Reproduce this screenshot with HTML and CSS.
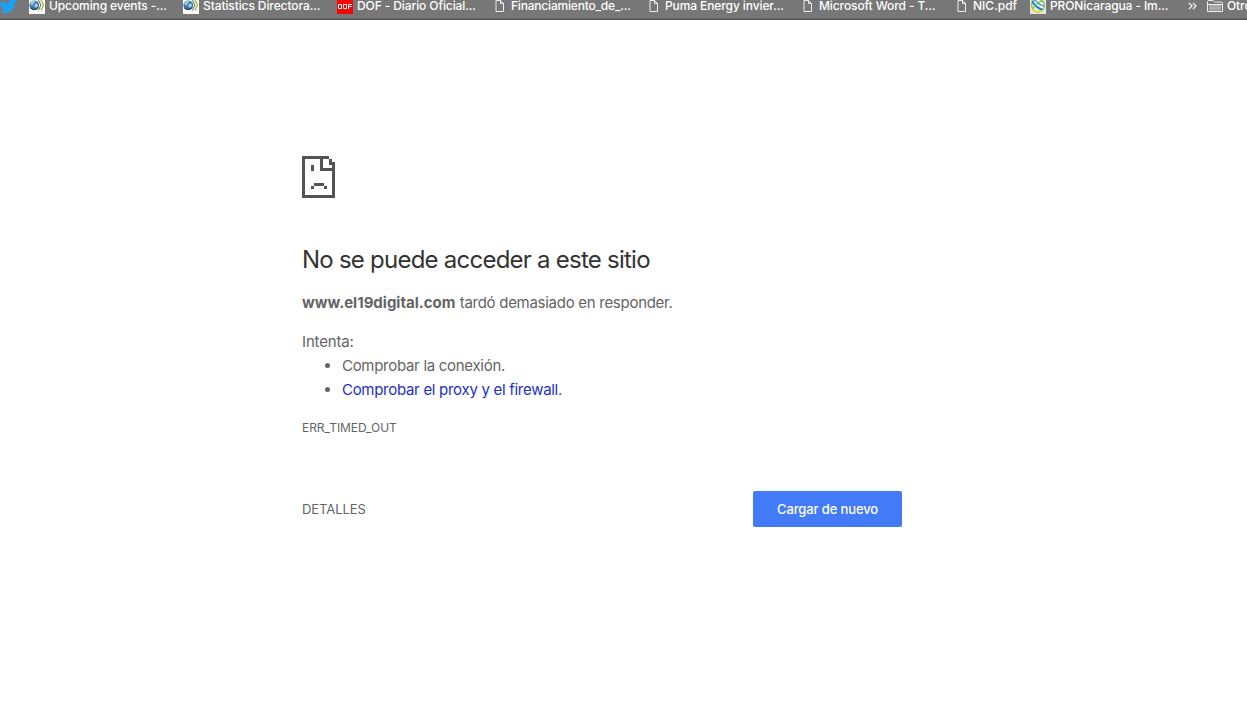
FILE: index.html
```
<!DOCTYPE html>
<html lang="es">
<head>
<meta charset="utf-8">
<title>www.el19digital.com</title>
<link rel="stylesheet" href="styles.css">
</head>
<body>
<svg class="defs" width="0" height="0">
  <symbol id="page" viewBox="0 0 10 13"><path d="M1 .5H5.500L8.500 3.500V11.500H1ZM5.500.5V3.500H8.500" fill="none" stroke="#eee"/></symbol>
  <symbol id="globe" viewBox="0 0 16 14"><path d="M0 0H16V14H0Z" fill="#fff"/><circle cx="5.300" cy="5.300" r="4.900" fill="#3d77a8"/><path d="M1 3Q4 0 7 1L5 3 3 6ZM6 4L8 3 9 6 7 8 5 6Z" fill="#a5cede"/><path d="M1.500 8Q6 11 9 7.500" stroke="#1c4b7c" stroke-width="1.300" fill="none"/><path d="M9.500 0L11.800 5 9.500 10.500" fill="none" stroke="#666" stroke-width="1"/><path d="M12 0L14.500 5 12 10.500" fill="none" stroke="#9fc33d" stroke-width="1.600"/></symbol>
</svg>
<nav class="bookmarks">
  <a class="bookmark twitter"><svg width="17" height="14" viewBox="0 0 17 14"><path d="M1.500 0C3 2.500 6 4 8.500 4 8 1 9.500-1 12-1L14.500 0H17L15 2.500C15 8 11 13 5 13 3 13 1.500 12.500 0 11.500 2 11.500 4 11 5 10 3 10 2 9 1.500 7.500H3C1 7 0 5 0 3.500L1.500 4C.5 3 .5 1 1.500 0Z" fill="#1da1f2"/></svg></a>
  <a class="bookmark events"><svg width="16" height="14"><use href="#globe"/></svg><span>Upcoming events -...</span></a>
  <a class="bookmark stats"><svg width="16" height="14"><use href="#globe"/></svg><span>Statistics Directora...</span></a>
  <a class="bookmark dof"><svg width="16" height="14" viewBox="0 0 16 14"><path d="M0 0H16V14H0Z" fill="#f00"/><path d="M1.500 4.500H4.500V8.500H1.500ZM6.500 4.500H9.500V8.500H6.500ZM11.500 9V4.500H15M11.500 6.500H14.500" fill="none" stroke="#fff"/></svg><span>DOF - Diario Oficial...</span></a>
  <a class="bookmark fin"><svg width="10" height="13"><use href="#page"/></svg><span>Financiamiento_de_...</span></a>
  <a class="bookmark puma"><svg width="10" height="13"><use href="#page"/></svg><span>Puma Energy invier...</span></a>
  <a class="bookmark word"><svg width="10" height="13"><use href="#page"/></svg><span>Microsoft Word - T...</span></a>
  <a class="bookmark nic"><svg width="10" height="13"><use href="#page"/></svg><span>NIC.pdf</span></a>
  <a class="bookmark pro"><svg width="16" height="14" viewBox="0 0 16 14"><path d="M0 0H16V14H0Z" fill="#e5e8d5"/><circle cx="8" cy="5.500" r="6.300" fill="#eef5f0" stroke="#86b04f" stroke-width="1.200"/><path d="M2 1Q6 8 13 10" stroke="#1685bd" stroke-width="2" fill="none"/><path d="M5 0Q9 5 14 6" stroke="#2a94c8" stroke-width="1.200" fill="none"/><path d="M3 9Q5 3 12 1" stroke="#79b24a" stroke-width="1.200" fill="none"/><path d="M2 9Q6 13 13 10.500" stroke="#e8d13a" stroke-width="1.500" fill="none"/></svg><span>PRONicaragua - Im...</span></a>
  <a class="bookmark more"><svg width="9" height="8" viewBox="0 0 9 8"><path d="M1 1L4 4 1 7M5 1L8 4 5 7" fill="none" stroke="#eee" stroke-width="1.300"/></svg></a>
  <a class="bookmark other"><svg width="16" height="12" viewBox="0 0 16 12"><path d="M.5 11.500V1.500L1.500.5H6L7.500 2H14.500L15.500 3V11.500Z" fill="#777" stroke="#eee"/><path d="M2 5H14V10.500H2Z" fill="#aaa"/><path d="M1 4.500H15" stroke="#eee"/></svg><span>Otros</span></a>
</nav>
<main class="error">
  <svg class="sad" width="33" height="42" viewBox="0 0 33 42" shape-rendering="crispEdges"><path fill="#535353" d="M0 0H27V3H30V6H33V42H0ZM3 3V39H30V15H18V3ZM21 3V12H30V9H27V6H27V3ZM9 9H12V15H9ZM12 27H22V30H12ZM9 30H12V33H9ZM22 30H25V33H22Z" fill-rule="evenodd"/></svg>
  <h1>No se puede acceder a este sitio</h1>
  <p class="summary"><strong>www.el19digital.com</strong> <span>tardó demasiado en responder.</span></p>
  <p class="try">Intenta:</p>
  <ul><li class="connection">Comprobar la conexión.</li><li class="proxy"><a>Comprobar el proxy y el firewall</a>.</li></ul>
  <p class="code">ERR_TIMED_OUT</p>
  <div class="actions"><span class="details">DETALLES</span><button>Cargar de nuevo</button></div>
</main>
</body>
</html>
```
FILE: styles.css
```
* { box-sizing: border-box; }
body { margin: 0; height: 720px; overflow: hidden; background: #fff; color: #646464; font-family: Inter, "Liberation Sans", sans-serif; font-size: 15px; line-height: 24px; }
.defs { display: block; }
.bookmarks { height: 20px; display: grid; grid-template-columns: 29px 154px 154px 158px 154px 154px 154px 73px 158px 19px 80px; background: #777; border-bottom: 1px solid #514d50; box-shadow: inset 0 -1px #6b6969; overflow: hidden; color: #fff; font-size: 12px; font-weight: 500; line-height: 14px; letter-spacing: -.1px; }
.bookmark { display: flex; align-items: flex-start; white-space: nowrap; min-width: 0; }
.bookmark svg { flex: none; }
.bookmark span { margin-left: 4px; margin-top: -1px; }
.fin span, .puma span, .word span, .nic span { margin-left: 6px; }
.fin { letter-spacing: -.2px; }
.nic { letter-spacing: 0; }
.more svg { margin-top: 2px; }
.error { width: 600px; margin: 136px 0 0 302px; }
.sad { display: block; }
h1 { margin: 47px 0 0; color: #333; font-size: 24px; font-weight: 400; line-height: 29px; letter-spacing: -.76px; white-space: nowrap; }
p { margin: 0; }
.summary { margin-top: 17px; white-space: nowrap; }
.summary span { letter-spacing: -.28px; }
.try { margin-top: 15px; letter-spacing: -.15px; }
ul { margin: 0; padding-left: 40px; letter-spacing: -.29px; }
.proxy a { color: #1b2fcf; }
.code { margin-top: 14px; font-size: 12px; letter-spacing: -.06px; }
.actions { margin-top: 51px; height: 36px; display: flex; justify-content: space-between; align-items: center; }
.details { font-size: 13px; letter-spacing: -.08px; }
button { width: 149px; height: 36px; border: 0; border-radius: 2px; padding: 0; background: #427af8; color: #fff; font: 500 13px Inter, sans-serif; letter-spacing: -.13px; white-space: nowrap; }
```
